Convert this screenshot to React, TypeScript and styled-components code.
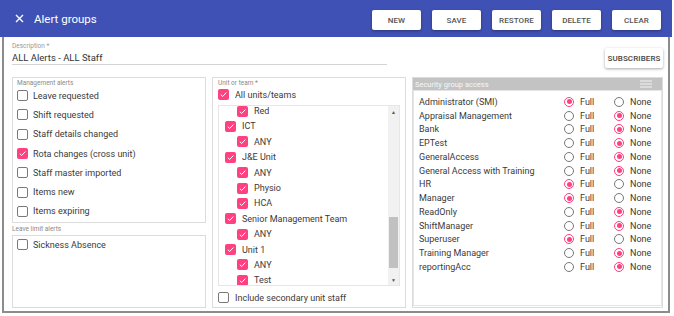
import React from "react";
import styled, { createGlobalStyle } from "styled-components";

const GlobalStyle = createGlobalStyle`
  body {
    margin: 0;
    background: #fff;
    font-family: Roboto, "Liberation Sans", sans-serif;
    color: #3c3c3c;
  }
  #root {
    width: 674px;
    height: 316px;
    overflow: hidden;
  }
`;

const PINK = "#ff4081";

const managementAlerts = [
  { label: "Leave requested", checked: false },
  { label: "Shift requested", checked: false },
  { label: "Staff details changed", checked: false },
  { label: "Rota changes (cross unit)", checked: true },
  { label: "Staff master imported", checked: false },
  { label: "Items new", checked: false },
  { label: "Items expiring", checked: false },
];

const units = [
  { label: "Red", level: 1 },
  { label: "ICT", level: 0 },
  { label: "ANY", level: 1 },
  { label: "J&E Unit", level: 0 },
  { label: "ANY", level: 1 },
  { label: "Physio", level: 1 },
  { label: "HCA", level: 1 },
  { label: "Senior Management Team", level: 0 },
  { label: "ANY", level: 1 },
  { label: "Unit 1", level: 0 },
  { label: "ANY", level: 1 },
  { label: "Test", level: 1 },
];

const securityGroups = [
  { name: "Administrator (SMI)", full: true },
  { name: "Appraisal Management", full: false },
  { name: "Bank", full: false },
  { name: "EPTest", full: false },
  { name: "GeneralAccess", full: false },
  { name: "General Access with Training", full: false },
  { name: "HR", full: true },
  { name: "Manager", full: true },
  { name: "ReadOnly", full: false },
  { name: "ShiftManager", full: false },
  { name: "Superuser", full: true },
  { name: "Training Manager", full: false },
  { name: "reportingAcc", full: false },
];

const Check: React.FC<{ checked: boolean }> = ({ checked }) => (
  <CheckBox $checked={checked}>
    {checked && (
      <svg width="9" height="9" viewBox="0 0 10 10">
        <polyline
          points="2,5.2 4.1,7.2 8.2,2.8"
          fill="none"
          stroke="#fff"
          strokeWidth="1.1"
        />
      </svg>
    )}
  </CheckBox>
);

const Radio: React.FC<{ on: boolean; label: string }> = ({ on, label }) => (
  <RadioOption>
    <RadioCircle $on={on}>{on && <RadioDot />}</RadioCircle>
    <span>{label}</span>
  </RadioOption>
);

const App: React.FC = () => {
  return (
    <>
      <GlobalStyle />
      <Frame>
        <Header>
          <TitleGroup>
            <svg width="9" height="9" viewBox="0 0 9 9">
              <path d="M1 1 L8 8 M8 1 L1 8" stroke="#fff" strokeWidth="1.4" />
            </svg>
            <Title>Alert groups</Title>
          </TitleGroup>
          <Actions>
            {["NEW", "SAVE", "RESTORE", "DELETE", "CLEAR"].map((b) => (
              <ActionButton key={b}>{b}</ActionButton>
            ))}
          </Actions>
        </Header>
        <Body>
          <DescriptionRow>
            <Field>
              <FieldLabel>Description *</FieldLabel>
              <FieldValue>ALL Alerts - ALL Staff</FieldValue>
            </Field>
            <SubscribersButton>SUBSCRIBERS</SubscribersButton>
          </DescriptionRow>
          <Panels>
            <LeftColumn>
              <AlertBox $height={146}>
                <BoxLabel>Management alerts</BoxLabel>
                <AlertList>
                  {managementAlerts.map((a) => (
                    <AlertRow key={a.label}>
                      <Check checked={a.checked} />
                      <span>{a.label}</span>
                    </AlertRow>
                  ))}
                </AlertList>
              </AlertBox>
              <OuterLabel>Leave limit alerts</OuterLabel>
              <AlertBox>
                <LeaveList>
                  <AlertRow>
                    <Check checked={false} />
                    <span>Sickness Absence</span>
                  </AlertRow>
                </LeaveList>
              </AlertBox>
            </LeftColumn>

            <UnitPanel>
              <BoxLabel>Unit or team *</BoxLabel>
              <UnitRow $level={0} $tight>
                <Check checked />
                <span>All units/teams</span>
              </UnitRow>
              <UnitList>
                <UnitItems>
                  {units.map((u, i) => (
                    <UnitRow key={i} $level={u.level}>
                      <Check checked />
                      <span>{u.label}</span>
                    </UnitRow>
                  ))}
                </UnitItems>
                <ScrollBar>
                  <ScrollArrow>▲</ScrollArrow>
                  <ScrollTrack>
                    <ScrollThumb style={{ marginTop: 100, height: 51 }} />
                  </ScrollTrack>
                  <ScrollArrow>▼</ScrollArrow>
                </ScrollBar>
              </UnitList>
              <UnitRow $level={0} $footer>
                <Check checked={false} />
                <span>Include secondary unit staff</span>
              </UnitRow>
            </UnitPanel>

            <SecurityPanel>
              <SecurityHeader>
                <span>Security group access</span>
                <svg width="12" height="8" viewBox="0 0 12 8">
                  <path
                    d="M0 1 H12 M0 4 H12 M0 7 H12"
                    stroke="#f4f4f4"
                    strokeWidth="1"
                  />
                </svg>
              </SecurityHeader>
              <SecurityList>
                {securityGroups.map((g) => (
                  <SecurityRow key={g.name}>
                    <span>{g.name}</span>
                    <Radio on={g.full} label="Full" />
                    <Radio on={!g.full} label="None" />
                  </SecurityRow>
                ))}
              </SecurityList>
            </SecurityPanel>
          </Panels>
        </Body>
      </Frame>
    </>
  );
};

const Frame = styled.div`
  width: 672px;
`;

const Header = styled.div`
  height: 37px;
  background: #3f51b5;
  display: flex;
  align-items: center;
  justify-content: space-between;
  padding: 0 11px 0 15px;
  box-sizing: border-box;
`;

const TitleGroup = styled.div`
  display: flex;
  align-items: center;
  gap: 10px;
`;

const Title = styled.div`
  color: #fff;
  font-size: 11.5px;
`;

const Actions = styled.div`
  display: flex;
  gap: 11px;
  margin-top: 3px;
`;

const ButtonBase = styled.div`
  height: 20px;
  background: #fff;
  border-radius: 2px;
  box-shadow: 0 1px 3px rgba(0, 0, 0, 0.35);
  display: flex;
  align-items: center;
  justify-content: center;
  font-size: 8px;
  font-weight: 500;
  color: #555;
  letter-spacing: 0.1px;
`;

const ActionButton = styled(ButtonBase)`
  width: 49px;
`;

const SubscribersButton = styled(ButtonBase)`
  width: 58px;
  margin-top: 6px;
  color: #444;
`;

const Body = styled.div`
  margin-left: 2px;
  width: 668px;
  height: 276px;
  box-sizing: border-box;
  border: 2px solid #8c8c8c;
  border-top: none;
  padding: 5px 5px 3px 8px;
`;

const DescriptionRow = styled.div`
  display: flex;
  justify-content: space-between;
  align-items: flex-start;
`;

const Field = styled.div`
  width: 375px;
  border-bottom: 1px solid #d4d4d4;
`;

const FieldLabel = styled.div`
  font-size: 6.5px;
  line-height: 9px;
  color: #999;
`;

const FieldValue = styled.div`
  font-size: 9.5px;
  line-height: 13px;
  color: #333;
`;

const Panels = styled.div`
  display: flex;
  gap: 6px;
  height: 231px;
  margin-top: 9px;
`;

const LeftColumn = styled.div`
  width: 194px;
  display: flex;
  flex-direction: column;
`;

const AlertBox = styled.div<{ $height?: number }>`
  border: 1px solid #dcdcdc;
  box-sizing: border-box;
  padding: 1px 4px 0 4px;
  ${(p) => (p.$height ? `height: ${p.$height}px;` : "flex: 1;")}
`;

const BoxLabel = styled.div`
  font-size: 6.5px;
  line-height: 9px;
  color: #8a8a8a;
`;

const OuterLabel = styled.div`
  font-size: 6.5px;
  line-height: 9px;
  color: #8a8a8a;
  margin: 2px 0 1px;
`;

const AlertList = styled.div`
  margin-top: -2px;
`;

const LeaveList = styled.div`
  margin-top: -2px;
`;

const AlertRow = styled.div`
  height: 19.3px;
  display: flex;
  align-items: center;
  gap: 5px;
  font-size: 9px;
  color: #3a3a3a;
`;

const CheckBox = styled.div<{ $checked: boolean }>`
  width: 11px;
  height: 11px;
  box-sizing: border-box;
  border-radius: 2px;
  flex: none;
  display: flex;
  align-items: center;
  justify-content: center;
  ${(p) =>
    p.$checked
      ? `background: ${PINK}; border: none;`
      : `border: 1.3px solid #7a7a7a; background: #fff;`}
`;

const UnitPanel = styled.div`
  width: 194px;
  border: 1px solid #dcdcdc;
  box-sizing: border-box;
  padding: 1px 5px 0 5px;
  display: flex;
  flex-direction: column;
`;

const UnitRow = styled.div<{ $level: number; $tight?: boolean; $footer?: boolean }>`
  height: ${(p) => (p.$footer ? 19 : 15.4)}px;
  flex: none;
  display: flex;
  align-items: center;
  gap: 6px;
  font-size: 9px;
  color: #3a3a3a;
  padding-left: ${(p) => (p.$tight || p.$footer ? 0 : 6 + p.$level * 12)}px;
  ${(p) => (p.$tight ? "margin-top: -1px;" : "")}
  ${(p) => (p.$footer ? "margin-top: 2px;" : "")}
`;

const UnitList = styled.div`
  height: 179px;
  margin-top: 3px;
  border: 1px solid #e6e6e6;
  display: flex;
  overflow: hidden;
  flex: none;
`;

const UnitItems = styled.div`
  flex: 1;
  overflow: hidden;
  margin-top: -3px;
`;

const ScrollBar = styled.div`
  width: 11px;
  background: #f1f1f1;
  display: flex;
  flex-direction: column;
`;

const ScrollArrow = styled.div`
  height: 11px;
  font-size: 5px;
  color: #555;
  display: flex;
  align-items: center;
  justify-content: center;
`;

const ScrollTrack = styled.div`
  flex: 1;
  padding: 0 1px;
`;

const ScrollThumb = styled.div`
  background: #c1c1c1;
`;

const SecurityPanel = styled.div`
  flex: 1;
  border: 1px solid #dcdcdc;
  box-sizing: border-box;
  display: flex;
  flex-direction: column;
`;

const SecurityHeader = styled.div`
  height: 12px;
  background: #c3c3c3;
  color: #f7f7f7;
  font-size: 7.5px;
  display: flex;
  align-items: center;
  justify-content: space-between;
  padding: 0 10px 0 2px;
  flex: none;
`;

const SecurityList = styled.div`
  flex: 1;
  margin: 0 0 1px 0;
  border: 1px solid #e4e4e4;
  padding: 4px 0 0 5px;
`;

const SecurityRow = styled.div`
  height: 13.75px;
  display: grid;
  grid-template-columns: 145px 50px 1fr;
  align-items: center;
  font-size: 9px;
  color: #3a3a3a;
`;

const RadioOption = styled.div`
  display: flex;
  align-items: center;
  gap: 6px;
`;

const RadioCircle = styled.div<{ $on: boolean }>`
  width: 10px;
  height: 10px;
  box-sizing: border-box;
  border-radius: 50%;
  border: 1.2px solid ${(p) => (p.$on ? PINK : "#777")};
  display: flex;
  align-items: center;
  justify-content: center;
`;

const RadioDot = styled.div`
  width: 5px;
  height: 5px;
  border-radius: 50%;
  background: ${PINK};
`;

export default App;
